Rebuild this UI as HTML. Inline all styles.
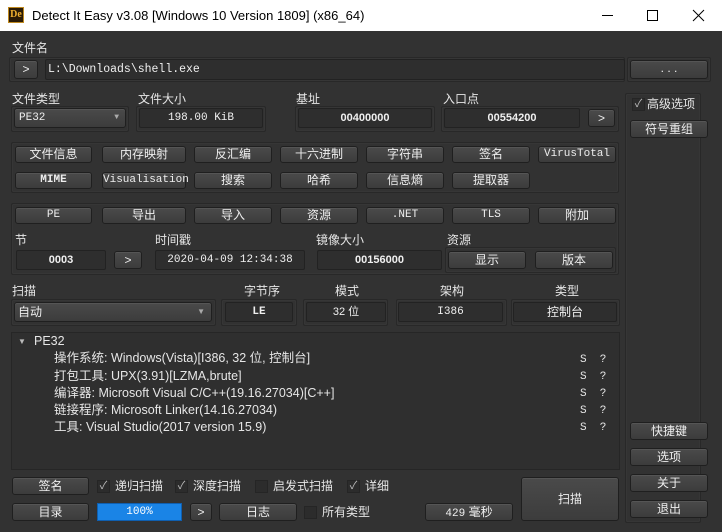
<!DOCTYPE html>
<html><head><meta charset="utf-8"><style>
*{margin:0;padding:0;box-sizing:border-box}
body{width:722px;height:532px;background:#323232;position:relative;overflow:hidden;font-family:"Liberation Sans","Noto Sans CJK SC",sans-serif;font-size:12px;color:#e6e6e6}
.a{position:absolute}
.t{position:absolute;white-space:nowrap;line-height:14px}
.g{position:absolute;border:1px solid #282828;box-shadow:inset 0 0 0 1px #363636;border-radius:2px}
.b{position:absolute;border:1px solid #1f1f1f;border-radius:3px;background:linear-gradient(#4a4a4a,#3c3c3c);box-shadow:inset 0 1px 0 #555;text-align:center;white-space:nowrap;color:#eee;font-size:12px}
.f{position:absolute;border:1px solid #222;border-radius:2px;background:#2e2e2e;text-align:center;white-space:nowrap;font-size:11px;font-weight:bold;color:#f0f0f0}
.m{font-family:"Liberation Mono","Noto Sans CJK SC",monospace;font-size:11px}
.cb{position:absolute;width:13px;height:13px;border:1px solid #252525;background:#2c2c2c;color:#bbb;font-size:11px;line-height:11px;text-align:center}
</style></head><body>
<div class="a" style="left:0;top:0;width:722px;height:31px;background:#fff"></div>
<div class="a" style="left:8px;top:7px;width:16px;height:16px;background:#2a1a05;border:1px solid #c08a20;color:#f0b030;font:bold 10px 'Liberation Serif';line-height:14px;text-align:center">De</div>
<div class="t" style="left:32px;top:8px;color:#000;font-size:13px;line-height:16px">Detect It Easy v3.08 [Windows 10 Version 1809] (x86_64)</div>
<div class="a" style="left:602px;top:15px;width:11px;height:1px;background:#000"></div>
<div class="a" style="left:647px;top:10px;width:11px;height:11px;border:1px solid #000"></div>
<svg class="a" style="left:692px;top:9px" width="13" height="13"><path d="M1 1L12 12M12 1L1 12" stroke="#000" stroke-width="1"/></svg>

<div class="t" style="left:12px;top:41px">文件名</div>
<div class="g" style="left:9px;top:57px;width:616px;height:25px"></div>
<div class="b" style="left:14px;top:60px;width:24px;height:19px;line-height:17px">&gt;</div>
<div class="f m" style="left:45px;top:59px;width:580px;height:21px;text-align:left;padding-left:2px;line-height:19px;font-weight:normal;font-size:11.5px">L:\Downloads\shell.exe</div>
<div class="g" style="left:627px;top:57px;width:84px;height:25px"></div>
<div class="b" style="left:630px;top:60px;width:78px;height:19px;line-height:15px">. . .</div>

<div class="g" style="left:625px;top:93px;width:76px;height:430px"></div>
<div class="cb" style="left:632px;top:98px">✓</div>
<div class="t" style="left:647px;top:97px">高级选项</div>
<div class="b" style="left:630px;top:120px;width:78px;height:18px;line-height:16px">符号重组</div>
<div class="b" style="left:630px;top:422px;width:78px;height:18px;line-height:16px">快捷键</div>
<div class="b" style="left:630px;top:448px;width:78px;height:18px;line-height:16px">选项</div>
<div class="b" style="left:630px;top:474px;width:78px;height:18px;line-height:16px">关于</div>
<div class="b" style="left:630px;top:500px;width:78px;height:18px;line-height:16px">退出</div>

<div class="t" style="left:12px;top:92px">文件类型</div>
<div class="t" style="left:138px;top:92px">文件大小</div>
<div class="t" style="left:296px;top:92px">基址</div>
<div class="t" style="left:443px;top:92px">入口点</div>
<div class="g" style="left:11px;top:106px;width:118px;height:26px"></div>
<div class="b m" style="left:14px;top:108px;width:112px;height:20px;line-height:18px;text-align:left;padding-left:4px">PE32<span style="position:absolute;right:6px;top:0;font-size:8px;color:#aaa">▼</span></div>
<div class="g" style="left:136px;top:106px;width:130px;height:26px"></div>
<div class="f m" style="left:139px;top:108px;width:124px;height:20px;line-height:18px;font-weight:normal">198.00 KiB</div>
<div class="g" style="left:295px;top:106px;width:140px;height:26px"></div>
<div class="f" style="left:298px;top:108px;width:134px;height:20px;line-height:18px">00400000</div>
<div class="g" style="left:441px;top:106px;width:178px;height:26px"></div>
<div class="f" style="left:444px;top:108px;width:136px;height:20px;line-height:18px">00554200</div>
<div class="b" style="left:588px;top:109px;width:27px;height:18px;line-height:16px">&gt;</div>

<div class="g" style="left:11px;top:142px;width:608px;height:51px"></div>
<div class="b" style="left:15px;top:146px;width:77px;height:17px;line-height:15px">文件信息</div>
<div class="b" style="left:102px;top:146px;width:84px;height:17px;line-height:15px">内存映射</div>
<div class="b" style="left:194px;top:146px;width:78px;height:17px;line-height:15px">反汇编</div>
<div class="b" style="left:280px;top:146px;width:78px;height:17px;line-height:15px">十六进制</div>
<div class="b" style="left:366px;top:146px;width:78px;height:17px;line-height:15px">字符串</div>
<div class="b" style="left:452px;top:146px;width:78px;height:17px;line-height:15px">签名</div>
<div class="b m" style="left:538px;top:146px;width:78px;height:17px;line-height:15px">VirusTotal</div>
<div class="b m" style="left:15px;top:172px;width:77px;height:17px;line-height:15px;font-weight:bold">MIME</div>
<div class="b m" style="left:102px;top:172px;width:84px;height:17px;line-height:15px">Visualisation</div>
<div class="b" style="left:194px;top:172px;width:78px;height:17px;line-height:15px">搜索</div>
<div class="b" style="left:280px;top:172px;width:78px;height:17px;line-height:15px">哈希</div>
<div class="b" style="left:366px;top:172px;width:78px;height:17px;line-height:15px">信息熵</div>
<div class="b" style="left:452px;top:172px;width:78px;height:17px;line-height:15px">提取器</div>

<div class="g" style="left:11px;top:203px;width:608px;height:72px"></div>
<div class="b m" style="left:15px;top:207px;width:77px;height:17px;line-height:15px">PE</div>
<div class="b" style="left:102px;top:207px;width:84px;height:17px;line-height:15px">导出</div>
<div class="b" style="left:194px;top:207px;width:78px;height:17px;line-height:15px">导入</div>
<div class="b" style="left:280px;top:207px;width:78px;height:17px;line-height:15px">资源</div>
<div class="b m" style="left:366px;top:207px;width:78px;height:17px;line-height:15px">.NET</div>
<div class="b m" style="left:452px;top:207px;width:78px;height:17px;line-height:15px">TLS</div>
<div class="b" style="left:538px;top:207px;width:78px;height:17px;line-height:15px">附加</div>
<div class="t" style="left:15px;top:233px">节</div>
<div class="t" style="left:155px;top:233px">时间戳</div>
<div class="t" style="left:316px;top:233px">镜像大小</div>
<div class="t" style="left:447px;top:233px">资源</div>
<div class="f" style="left:16px;top:250px;width:90px;height:20px;line-height:18px">0003</div>
<div class="b" style="left:114px;top:251px;width:28px;height:18px;line-height:16px">&gt;</div>
<div class="f m" style="left:155px;top:250px;width:150px;height:20px;line-height:18px;font-weight:normal">2020-04-09 12:34:38</div>
<div class="f" style="left:317px;top:250px;width:125px;height:20px;line-height:18px">00156000</div>
<div class="g" style="left:445px;top:247px;width:171px;height:26px"></div>
<div class="b" style="left:448px;top:251px;width:78px;height:18px;line-height:16px">显示</div>
<div class="b" style="left:535px;top:251px;width:78px;height:18px;line-height:16px">版本</div>

<div class="t" style="left:12px;top:284px">扫描</div>
<div class="t" style="left:244px;top:284px">字节序</div>
<div class="t" style="left:335px;top:284px">模式</div>
<div class="t" style="left:440px;top:284px">架构</div>
<div class="t" style="left:555px;top:284px">类型</div>
<div class="g" style="left:11px;top:299px;width:205px;height:27px"></div>
<div class="b" style="left:14px;top:302px;width:198px;height:20px;line-height:18px;text-align:left;padding-left:3px">自动<span style="position:absolute;right:6px;top:0;font-size:8px;color:#aaa">▼</span></div>
<div class="g" style="left:221px;top:299px;width:76px;height:27px"></div>
<div class="f m" style="left:225px;top:302px;width:68px;height:20px;line-height:18px">LE</div>
<div class="g" style="left:303px;top:299px;width:85px;height:27px"></div>
<div class="f" style="left:306px;top:302px;width:80px;height:20px;line-height:18px;font-weight:normal">32 位</div>
<div class="g" style="left:396px;top:299px;width:111px;height:27px"></div>
<div class="f m" style="left:398px;top:302px;width:105px;height:20px;line-height:18px;font-weight:normal">I386</div>
<div class="g" style="left:511px;top:299px;width:109px;height:27px"></div>
<div class="f" style="left:513px;top:302px;width:104px;height:20px;line-height:18px;font-weight:normal;font-size:12px">控制台</div>

<div class="a" style="left:11px;top:332px;width:609px;height:138px;border:1px solid #262626;background:#2f2f2f"></div>
<div class="t" style="left:18px;top:335px;font-size:8px;color:#bbb">▼</div>
<div class="t" style="left:34px;top:334px;font-size:12.5px">PE32</div>
<div class="t" style="left:54px;top:351px;font-size:12.5px">操作系统: Windows(Vista)[I386, 32 位, 控制台]</div>
<div class="t" style="left:54px;top:369px;font-size:12.5px">打包工具: UPX(3.91)[LZMA,brute]</div>
<div class="t" style="left:54px;top:386px;font-size:12.5px">编译器: Microsoft Visual C/C++(19.16.27034)[C++]</div>
<div class="t" style="left:54px;top:403px;font-size:12.5px">链接程序: Microsoft Linker(14.16.27034)</div>
<div class="t" style="left:54px;top:420px;font-size:12.5px">工具: Visual Studio(2017 version 15.9)</div>
<div class="t m" style="left:580px;top:352px;line-height:17px">S&nbsp;&nbsp;?<br>S&nbsp;&nbsp;?<br>S&nbsp;&nbsp;?<br>S&nbsp;&nbsp;?<br>S&nbsp;&nbsp;?</div>

<div class="b" style="left:12px;top:477px;width:77px;height:18px;line-height:16px">签名</div>
<div class="cb" style="left:97px;top:480px">✓</div><div class="t" style="left:115px;top:479px">递归扫描</div>
<div class="cb" style="left:175px;top:480px">✓</div><div class="t" style="left:193px;top:479px">深度扫描</div>
<div class="cb" style="left:255px;top:480px"></div><div class="t" style="left:273px;top:479px">启发式扫描</div>
<div class="cb" style="left:347px;top:480px">✓</div><div class="t" style="left:365px;top:479px">详细</div>
<div class="b" style="left:12px;top:503px;width:77px;height:18px;line-height:16px">目录</div>
<div class="a m" style="left:97px;top:503px;width:85px;height:18px;background:#1a84e6;border:1px solid #0f5fb0;color:#fff;text-align:center;line-height:16px">100%</div>
<div class="b" style="left:190px;top:503px;width:22px;height:18px;line-height:16px">&gt;</div>
<div class="b" style="left:219px;top:503px;width:78px;height:18px;line-height:16px">日志</div>
<div class="cb" style="left:304px;top:506px"></div><div class="t" style="left:322px;top:505px">所有类型</div>
<div class="b" style="left:425px;top:503px;width:88px;height:18px;line-height:16px"><span class="m">429</span> 毫秒</div>
<div class="b" style="left:521px;top:477px;width:98px;height:44px;line-height:42px">扫描</div>
</body></html>
